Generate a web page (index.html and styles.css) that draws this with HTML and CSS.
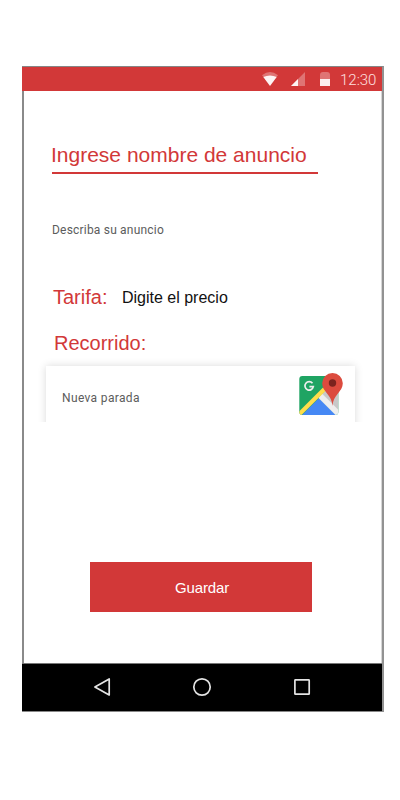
FILE: index.html
```html
<!DOCTYPE html>
<html lang="es">
<head>
<meta charset="utf-8">
<title>Nuevo anuncio</title>
<link rel="stylesheet" href="styles.css">
</head>
<body>
<main class="phone">
  <header class="status">
    <svg class="status-icons" width="74" height="24" viewBox="0 0 74 24">
      <path d="M0 8.200Q8 1.800 16 8.200L8 18Z" fill="#fff" opacity=".3"/>
      <path d="M1.300 10Q8 7 14.700 10L8 19Z" fill="#fff" opacity=".92"/>
      <path d="M29 19L43 5V19Z" fill="#fff" opacity=".3"/>
      <path d="M29 19L36 12V19Z" fill="#fff" opacity=".92"/>
      <path d="M58 12V8Q58 5 61 5H65Q68 5 68 8V12Z" fill="#fff" opacity=".3"/>
      <path d="M58 12H68V19H58Z" fill="#fff" opacity=".92"/>
    </svg>
    <time class="clock">12:30</time>
  </header>
  <section class="screen">
    <h1 class="title">Ingrese nombre de anuncio</h1>
    <p class="describe">Describa su anuncio</p>
    <div class="rate"><span class="label">Tarifa:</span><span class="price">Digite el precio</span></div>
    <h2 class="label route">Recorrido:</h2>
    <div class="card-clip">
      <div class="card">
        <span class="stop">Nueva parada</span>
        <svg class="map" width="46" height="44" viewBox="0 0 46 44">
          <defs><clipPath id="tile"><rect x="1.300" y="4" width="39" height="39" rx="3"/></clipPath></defs>
          <g clip-path="url(#tile)">
            <rect x="1" y="4" width="40" height="39" fill="#1fa463"/>
            <path d="M24 22L41 4V41Z" fill="#c8c8c8"/>
            <path d="M21 26L3 44H39Z" fill="#4688f4"/>
            <path d="M20.500 26L24 21.500L42 39.500V44H38.500Z" fill="#eee"/>
            <path d="M0 40.500L25 15.500L28 18.500L3 43.500L0 44Z" fill="#ffdd4b"/>
          </g>
          <path d="M14.500 11.300A4.200 4.200 0 1 0 15.300 14.700H11.400" fill="none" stroke="#eee" stroke-width="1.700"/>
          <path d="M34.500 34C34.200 23 24.200 20 24.200 11.300A10.300 10.300 0 0 1 44.800 11.300C44.800 20 34.800 23 34.500 34Z" fill="#dc4b3e"/>
          <circle cx="34.500" cy="11" r="3.700" fill="#7b231e"/>
        </svg>
      </div>
    </div>
    <button class="save">Guardar</button>
  </section>
  <nav class="nav">
    <svg class="nav-icons" width="220" height="20" viewBox="0 0 220 20" fill="none" stroke="#e4e4e4" stroke-width="1.700" stroke-linejoin="round">
      <path d="M2.900 10L17.200 2V18Z"/>
      <circle cx="110" cy="10" r="8.200"/>
      <rect x="202.900" y="2.900" width="14.300" height="14.300" rx=".5"/>
    </svg>
  </nav>
</main>
</body>
</html>
```
FILE: styles.css
```css
* { box-sizing: border-box; }
body { margin: 0; background: #fff; font-family: "Liberation Sans", Arial, sans-serif; }
h1, h2, p { margin: 0; font-weight: 400; }
.phone { width: 362px; height: 646px; margin: 66px 0 0 22px; border-top: 1px solid #868686; border-right: 2px solid #929292; display: flex; flex-direction: column; }
.status { height: 24px; flex: none; background: #d23838; display: flex; align-items: center; justify-content: flex-end; padding-right: 6px; }
.status-icons { margin-right: 4px; }
.clock { width: 36px; font: 300 15px/24px Roboto, sans-serif; color: #ffe0e0; white-space: nowrap; padding-top: 2px; }
.screen { height: 572px; flex: none; border-left: 2px solid #8a8a8a; border-right: 1px solid #d6d6d6; display: flex; flex-direction: column; align-items: flex-start; padding-top: 47px; }
.title { width: 266px; height: 36px; margin-left: 28px; border-bottom: 2px solid #d23838; color: #d23838; font-size: 21px; line-height: 34px; white-space: nowrap; text-indent: -1px; }
.describe, .stop { font: 12px/16px Roboto, sans-serif; color: #5c5c5c; }
.describe { margin: 48px 0 0 28px; letter-spacing: .2px; }
.rate { display: flex; align-items: center; height: 24px; margin: 47px 0 0 29px; }
.label { color: #d23838; font-size: 20px; line-height: 24px; }
.price { margin-left: 14.5px; padding-top: 2px; font-size: 16px; color: #111; }
.route { margin: 22px 0 0 30px; }
.card-clip { width: 325px; height: 67px; margin-left: 14px; overflow: hidden; padding: 11px 8px 0; }
.card { width: 309px; height: 70px; background: #fff; box-shadow: 0 0 8px rgba(0,0,0,.15); display: flex; align-items: flex-start; justify-content: space-between; padding: 6px 11px 0 16px; }
.stop { margin-top: 18px; letter-spacing: .35px; }
.save { width: 222px; height: 50px; margin: 140px 0 0 66px; padding: 0 0 0 2px; border: 0; background: #d23838; color: #fff; font: 15px "Liberation Sans", Arial, sans-serif; letter-spacing: -.15px; }
.nav { width: 360px; height: 49px; flex: none; background: #000; border-top: 1px solid #777; border-bottom: 1px solid #888; display: flex; justify-content: center; align-items: center; padding-bottom: 1px; }
```
